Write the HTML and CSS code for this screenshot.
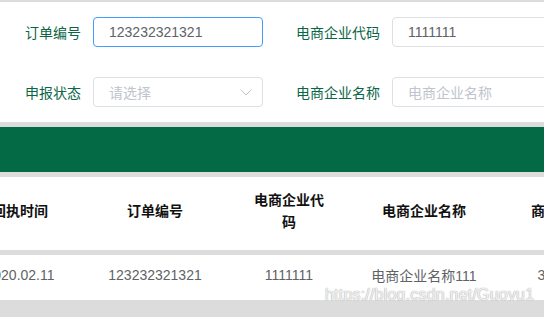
FILE: index.html
```html
<!DOCTYPE html>
<html lang="zh-CN">
<head>
    <meta charset="UTF-8">
    <meta name="viewport" content="width=device-width, initial-scale=1.0">
    <title>申报查询</title>
    <link rel="stylesheet" href="styles.css">
</head>
<body>
    <div class="search">
        <div class="form-row">
            <div class="form-item">
                <label class="label label-sm">订单编号</label>
                <div class="input is-focus"><span class="value">123232321321</span></div>
            </div>
            <div class="form-item">
                <label class="label">电商企业代码</label>
                <div class="input input-wide"><span class="value">1111111</span></div>
            </div>
        </div>
        <div class="form-row">
            <div class="form-item">
                <label class="label label-sm">申报状态</label>
                <div class="input select">
                    <span class="placeholder">请选择</span>
                    <svg class="arrow" width="12" height="7" viewBox="0 0 12 7"><path d="M0.5 0.5 L6 6 L11.5 0.5" fill="none" stroke="#c0c4cc" stroke-width="1"/></svg>
                </div>
            </div>
            <div class="form-item">
                <label class="label">电商企业名称</label>
                <div class="input input-wide"><span class="placeholder">电商企业名称</span></div>
            </div>
        </div>
    </div>

    <div class="banner"></div>

    <div class="table-wrap">
        <table class="grid">
            <colgroup>
                <col class="c1"><col class="c2"><col class="c3"><col class="c4"><col class="c5">
            </colgroup>
            <thead>
                <tr>
                    <th>回执时间</th>
                    <th>订单编号</th>
                    <th>电商企业代码</th>
                    <th>电商企业名称</th>
                    <th>商品名称</th>
                </tr>
            </thead>
            <tbody>
                <tr>
                    <td>2020.02.11</td>
                    <td>123232321321</td>
                    <td>1111111</td>
                    <td>电商企业名称111</td>
                    <td>300.00</td>
                </tr>
            </tbody>
        </table>
        <div class="watermark">https://blog.csdn.net/Guoyu1_</div>
    </div>
</body>
</html>
```

FILE: styles.css
```css
* { margin: 0; padding: 0; box-sizing: border-box; font-family: "Liberation Sans", "Noto Sans CJK SC", sans-serif; }
body { background: #dcdcdc; width: 544px; height: 317px; overflow: hidden; }

.search { background: #fff; margin-top: 2px; padding: 15px 0 15px 13px; display: flex; flex-direction: column; gap: 30px; }
.form-row { display: flex; gap: 29px; }
.form-item { display: flex; align-items: center; height: 30px; }
.label { width: 100px; padding-right: 12px; text-align: right; font-size: 14px; color: #0a6645; white-space: nowrap; }
.label-sm { width: 80px; }
.input { width: 170px; height: 30px; border: 1px solid #dcdfe6; border-radius: 4px; padding: 0 15px; display: flex; align-items: center; font-size: 14px; color: #606266; background: #fff; }
.input-wide { width: 200px; }
.is-focus { border-color: #409eff; }
.placeholder { color: #c0c4cc; }
.select { justify-content: space-between; padding-right: 10px; }
.arrow { display: block; }

.banner { margin-top: 5px; height: 45px; background: #036a45; }

.table-wrap { position: relative; margin-top: 5px; overflow: hidden; }
.grid { margin-left: -30px; width: 638px; table-layout: fixed; border-collapse: collapse; background: #fff; }
.c1 { width: 100px; }
.c2 { width: 170px; }
.c3 { width: 98px; }
.c4 { width: 172px; }
.c5 { width: 98px; }
.grid th { height: 75px; padding: 0 10px 5px; border-bottom: 5px solid #dcdcdc; font-size: 14px; font-weight: bold; color: #111; line-height: 22px; text-align: center; vertical-align: middle; }
.grid td { height: 48px; padding: 0 10px 4px; border-bottom: 1px solid #dcdcdc; font-size: 14px; color: #606266; text-align: center; vertical-align: middle; white-space: nowrap; }

.watermark { position: absolute; left: 325px; top: 109px; font-size: 16px; color: rgba(255, 255, 255, 0.85); text-shadow: 0 0 1px #aaa, 0 0 1px #aaa; letter-spacing: 0.2px; }
```
